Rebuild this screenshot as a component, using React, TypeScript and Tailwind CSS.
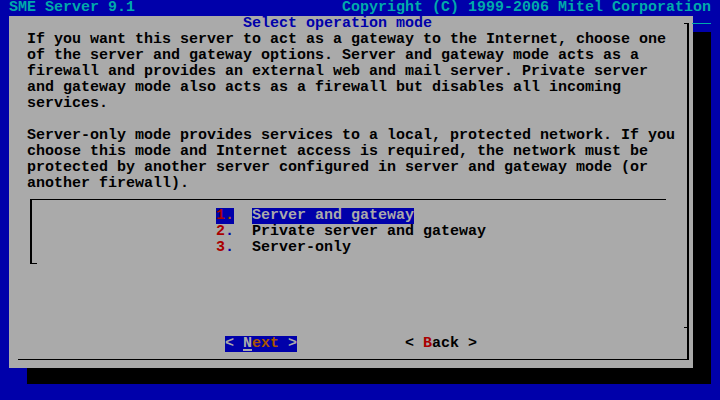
const intro = [
  "If you want this server to act as a gateway to the Internet, choose one",
  "of the server and gateway options. Server and gateway mode acts as a",
  "firewall and provides an external web and mail server. Private server",
  "and gateway mode also acts as a firewall but disables all incoming",
  "services.",
  "",
  "Server-only mode provides services to a local, protected network. If you",
  "choose this mode and Internet access is required, the network must be",
  "protected by another server configured in server and gateway mode (or",
  "another firewall).",
];

const options = [
  { n: "1", label: "Server and gateway", active: true },
  { n: "2", label: "Private server and gateway", active: false },
  { n: "3", label: "Server-only", active: false },
];

export default function App() {
  return (
    <div className="w-[720px] h-[400px] bg-[#0000aa] overflow-hidden font-['Liberation_Mono',monospace] font-bold text-[15px] leading-4">
      {/* top status line */}
      <div className="flex justify-between h-4 px-[9px] text-[#00aaaa] whitespace-pre">
        <span>SME Server 9.1</span>
        <span>Copyright (C) 1999-2006 Mitel Corporation</span>
      </div>

      {/* dialog window */}
      <div className="relative ml-[9px] w-[684px] h-[352px] bg-[#aaaaaa] text-black shadow-[18px_16px_0_0_#000]">
        {/* frame lines */}
        <div className="absolute left-[9px] top-[7px] w-[671px] h-[337px] border-r-2 border-b border-black" />
        <div className="absolute left-[675px] top-[7px] w-[5px] h-px bg-black" />
        <div className="absolute left-[675px] top-[311px] w-[3px] h-px bg-black" />
        <div className="absolute left-[683px] top-[7px] w-[19px] h-px bg-[#00aaaa]" />

        <div className="relative flex flex-col">
          <div className="h-4 pl-[234px] text-[#0000aa] whitespace-pre">Select operation mode</div>

          <div className="flex flex-col pl-[18px]">
            {intro.map((line, i) => (
              <div key={i} className="h-4 whitespace-pre">
                {line}
              </div>
            ))}
          </div>

          {/* listbox */}
          <div className="mt-[7px] ml-[21px] w-[636px] border-t border-l-2 border-black">
            <div className="flex flex-col pt-2 pb-[7px] pl-[184px]">
              {options.map((o) => (
                <div key={o.n} className="flex h-4 whitespace-pre">
                  <span className={o.active ? "bg-[#0000aa]" : ""}>
                    <span className="text-[#aa0000]">{o.n}</span>
                    <span className={o.active ? "text-[#aa5500]" : "text-[#0000aa]"}>.</span>
                  </span>
                  <span>{"  "}</span>
                  <span className={o.active ? "bg-[#0000aa] text-[#aaaaaa]" : ""}>{o.label}</span>
                </div>
              ))}
            </div>
            <div className="w-[5px] h-px bg-black" />
          </div>

          {/* buttons */}
          <div className="flex mt-[72px] pl-[216px] h-4 whitespace-pre">
            <span className="flex bg-[#0000aa] text-[#aaaaaa]">
              <span>{"< "}</span>
              <span className="relative">
                N
                <span className="absolute left-0 right-0 bottom-px h-[2px] bg-[#aaaaaa]" />
              </span>
              <span className="text-[#aa5500]">ext</span>
              <span>{" >"}</span>
            </span>
            <span className="flex ml-[108px]">
              <span>{"< "}</span>
              <span className="text-[#aa0000]">B</span>
              <span>{"ack >"}</span>
            </span>
          </div>
        </div>
      </div>
    </div>
  );
}
